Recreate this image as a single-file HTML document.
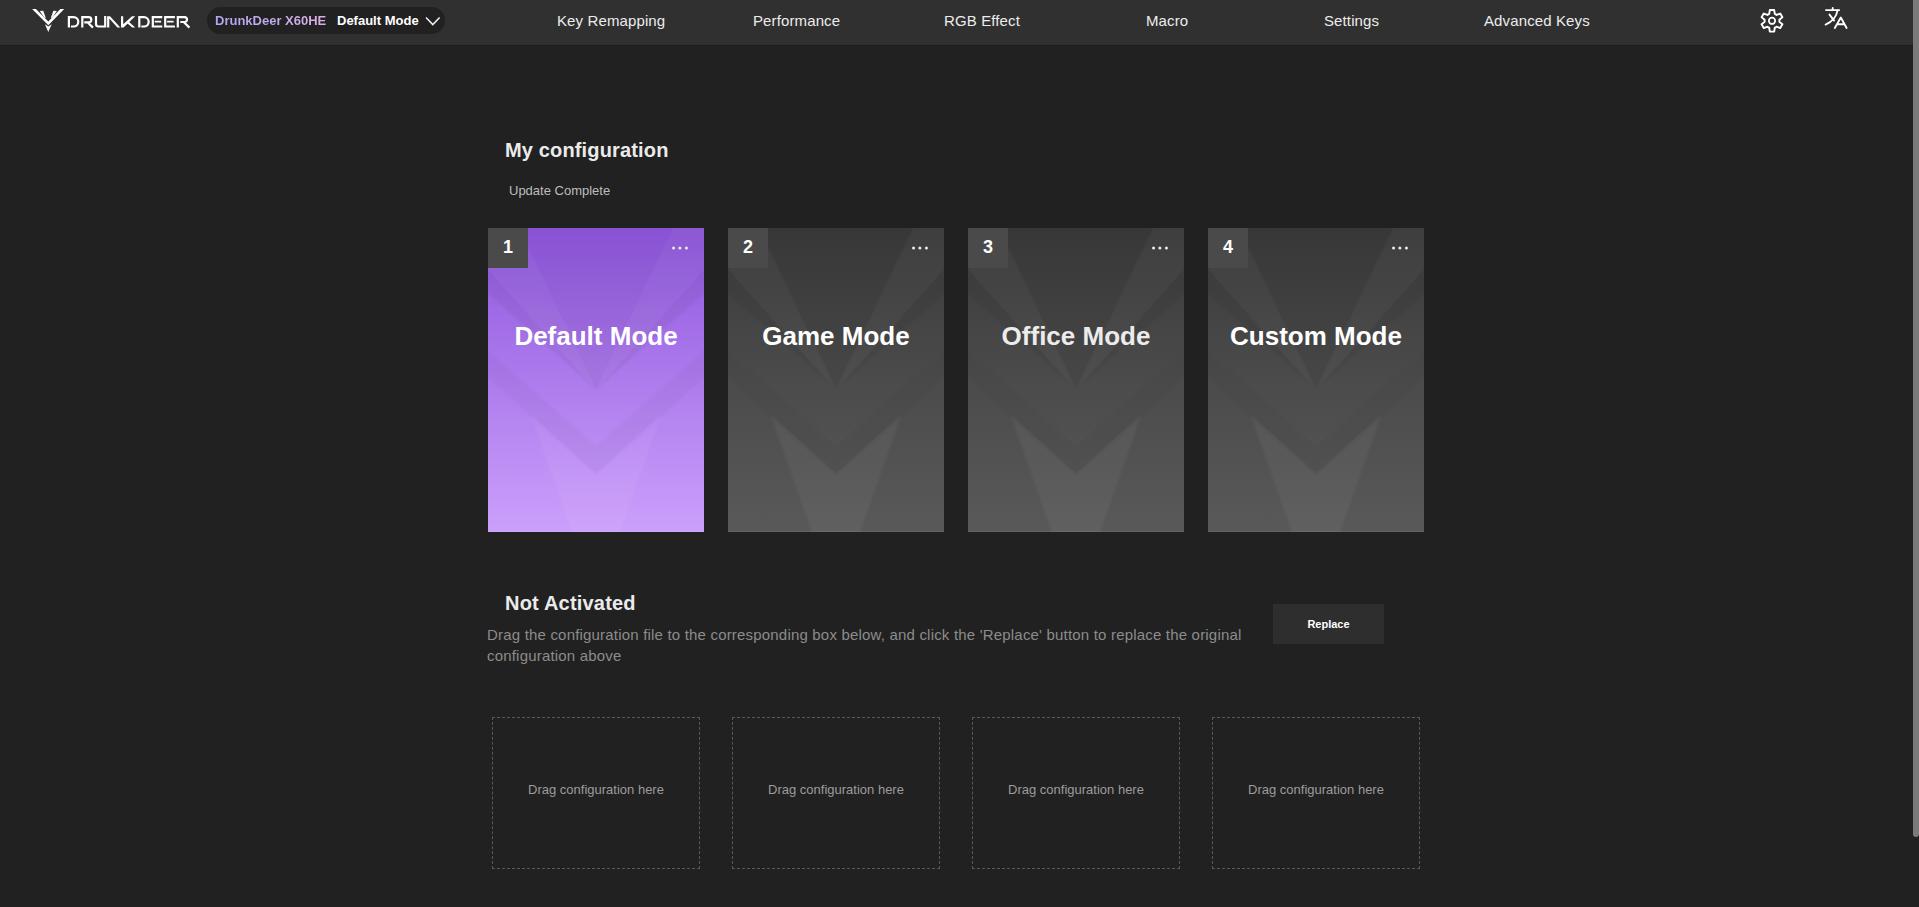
<!DOCTYPE html>
<html><head><meta charset="utf-8">
<style>
*{margin:0;padding:0;box-sizing:border-box}
html,body{width:1919px;height:907px;overflow:hidden;background:#212121;font-family:"Liberation Sans",sans-serif;color:#fff}
.abs{position:absolute}
#hdr{position:absolute;left:0;top:0;width:1913px;height:45px;background:#303030}
#sb{position:absolute;left:1913px;top:0;width:6px;height:837px;background:#7a7a7a;border-radius:0 0 3px 3px}
.pill{position:absolute;left:207px;top:7px;width:238px;height:27px;border-radius:14px;background:#212121}
.t{position:absolute;white-space:nowrap;line-height:1}
.nav{font-size:15px;color:#ececec;top:13px;letter-spacing:0.12px}
.card{position:absolute;top:228px;width:216px;height:304px;overflow:hidden}
.card svg.bg{position:absolute;left:0;top:0}
.card::after{content:"";position:absolute;left:0;right:0;bottom:0;height:1px;background:rgba(255,255,255,0.07)}
.badge{position:absolute;left:0;top:0;width:40px;height:40px;background:#4a4a4a;color:#fff;font-weight:bold;font-size:18px;line-height:38px;text-align:center}
.dots{position:absolute;left:184px;top:17.9px;width:24px;height:10px}
.dots i{position:absolute;top:0;width:3px;height:3px;border-radius:50%;background:#e8e8e8}
.mtitle{position:absolute;left:0;width:216px;top:93px;text-align:center;font-size:26px;font-weight:bold;color:#fff;line-height:30px;white-space:nowrap}
.drop{position:absolute;top:717px;width:208px;height:152px;border:1px dashed #585858}
.drop span{position:absolute;left:0;right:0;top:64px;text-align:center;font-size:13px;color:#9c9c9c;line-height:16px}
</style></head><body>
<div id="hdr"></div>
<div id="sb"></div>
<div class="abs" style="left:0;top:45px;width:1913px;height:1px;background:#1c1c1c"></div>
<!-- logo -->
<svg class="abs" style="left:0;top:0" width="200" height="45" viewBox="0 0 200 45">
 <g fill="#fff">
  <polygon points="32.1,9.1 35.9,9.1 48.3,21.6 60.4,9.1 64.2,9.1 48.3,25.3"/>
  <polygon points="39.8,11.0 43.2,10.8 45.8,18.0 44.2,17.4"/>
  <polygon points="56.8,11.0 53.4,10.8 50.8,18.0 52.4,17.4"/>
  <polygon points="44.9,24.2 48.3,26.6 51.7,24.2 48.3,32.1"/>
  <polygon points="107.1,16.2 110.0,16.2 120.3,27.4 117.4,27.4 109.3,18.6 109.3,27.4 107.1,27.4"/>
  <polygon points="121,16.2 123.2,16.2 123.2,24.3 132,16.2 135.2,16.2 123.6,27.4 121,27.4"/>
  <polygon points="126.9,23.0 128.6,21.4 135.2,27.4 132.2,27.4"/>
 </g>
 <g fill="none" stroke="#fff" stroke-width="2.2">
  <path d="M68.9,27.6 V17.1 H73.6 A4.7,4.7 0 0 1 73.6,26.5 H70.9"/>
  <path d="M82.3,27.6 V17.1 H88.7 A2.6,2.6 0 0 1 88.7,22.3 H84.3 M87.6,22.3 L92.9,27.6"/>
  <path d="M96,16 V24 A2.5,2.5 0 0 0 98.5,26.5 H105.2 V16"/>
  <path d="M139.3,27.6 V17.1 H144 A4.7,4.7 0 0 1 144,26.5 H141.3"/>
  <path d="M162.3,17.1 H152.8 V26.5 H162.3"/>
  <path d="M174.9,17.1 H165.2 V26.5 H174.9"/>
  <path d="M177.8,27.6 V17.1 H185 A2.5,2.5 0 0 1 185,22 H180.3 M183.7,22 L189.4,27.6"/>
 </g>
 <g fill="none" stroke="#fff" stroke-width="1.8">
  <path d="M154.7,21.7 H161.1 M167.1,21.7 H173.6"/>
 </g>
</svg>
<div class="pill"></div>
<div class="t" style="left:215px;top:14px;font-size:13px;font-weight:bold;color:#b9a2e6;background:linear-gradient(90deg,#b3a6f4,#d9b0e2);-webkit-background-clip:text;background-clip:text;-webkit-text-fill-color:transparent">DrunkDeer X60HE</div>
<div class="t" style="left:337px;top:14px;font-size:13px;font-weight:bold;color:#fff">Default Mode</div>
<svg class="abs" style="left:420px;top:12px" width="24" height="18" viewBox="0 0 24 18"><path d="M6,5.6 L12.8,12.6 L19.6,5.6" fill="none" stroke="#f0f0f0" stroke-width="1.5"/></svg>

<div class="t nav" style="left:557px">Key Remapping</div>
<div class="t nav" style="left:753px">Performance</div>
<div class="t nav" style="left:944px">RGB Effect</div>
<div class="t nav" style="left:1146px">Macro</div>
<div class="t nav" style="left:1324px">Settings</div>
<div class="t nav" style="left:1484px">Advanced Keys</div>

<svg class="abs" style="left:1752px;top:1px" width="40" height="40" viewBox="-20 -19.8 40 40">
 <path d="M-2.77,-6.86 L-2.19,-10.78 L2.19,-10.78 L2.77,-6.86 A7.4,7.4 0 0 1 4.56,-5.83 L8.24,-7.29 L10.43,-3.49 L7.33,-1.03 A7.4,7.4 0 0 1 7.33,1.03 L10.43,3.49 L8.24,7.29 L4.56,5.83 A7.4,7.4 0 0 1 2.77,6.86 L2.19,10.78 L-2.19,10.78 L-2.77,6.86 A7.4,7.4 0 0 1 -4.56,5.83 L-8.24,7.29 L-10.43,3.49 L-7.33,1.03 A7.4,7.4 0 0 1 -7.33,-1.03 L-10.43,-3.49 L-8.24,-7.29 L-4.56,-5.83 A7.4,7.4 0 0 1 -2.77,-6.86 Z" fill="none" stroke="#fff" stroke-width="1.9" stroke-linejoin="round"/>
 <circle cx="0" cy="0" r="3.15" fill="none" stroke="#fff" stroke-width="1.75"/>
</svg>
<svg class="abs" style="left:1820px;top:3px" width="32" height="32" viewBox="0 0 32 32">
 <g fill="none" stroke="#fff" stroke-width="1.85" stroke-linecap="round" stroke-linejoin="round">
  <path d="M6.0,7.06 H19.2 M12.7,5.0 V6.9"/>
  <path d="M17.6,7.4 C16.6,12.5 13,18.5 5.6,21.6"/>
  <path d="M9.5,11.6 L14.1,17.6"/>
  <path d="M14.8,25.0 L20.8,14.5 L26.6,25.0 M17.2,21.2 H24.4"/>
 </g>
</svg>

<div class="t" style="left:505px;top:140px;font-size:20px;font-weight:bold;color:#ebebeb;letter-spacing:0.15px">My configuration</div>
<div class="t" style="left:509px;top:184px;font-size:13px;color:#bdbdbd">Update Complete</div>

<div class="card" style="left:488px;background:linear-gradient(#8f56de,#cba0fb)">
 <svg class="bg" width="216" height="304" viewBox="0 0 216 304"><defs><filter id="soft" x="-5%" y="-5%" width="110%" height="110%"><feGaussianBlur stdDeviation="1.1"/></filter></defs><g id="pat" filter="url(#soft)">
  <polygon points="-4,-4 220,-4 220,62 108,162 -4,62" fill="#000" fill-opacity="0.05"/>
  <polygon points="-4,-4 29,-4 108,162 -4,37" fill="#fff" fill-opacity="0.035"/>
  <polygon points="220,-4 187,-4 108,162 220,37" fill="#fff" fill-opacity="0.035"/>
  <polygon points="-4,118.4 108,218 220,118.4 220,146.4 108,247 -4,146.4" fill="#000" fill-opacity="0.032"/>
  <path d="M43,188 L108,247 L173,188 L130,310 L86,310 Z" fill="#fff" fill-opacity="0.045"/>
 </g></svg>
 <div class="badge">1</div>
 <svg class="dots" width="24" height="10" viewBox="0 0 24 10"><g fill="#ececec"><circle cx="1.55" cy="2" r="1.5"/><circle cx="7.9" cy="2" r="1.5"/><circle cx="14.45" cy="2" r="1.5"/></g></svg>
 <div class="mtitle">Default Mode</div>
</div>
<div class="card" style="left:728px;background:linear-gradient(#3a3a3a,#4b4b4b 50%,#595959)">
 <svg class="bg" width="216" height="304" viewBox="0 0 216 304"><use href="#pat"/></svg>
 <div class="badge">2</div>
 <svg class="dots" width="24" height="10" viewBox="0 0 24 10"><g fill="#ececec"><circle cx="1.55" cy="2" r="1.5"/><circle cx="7.9" cy="2" r="1.5"/><circle cx="14.45" cy="2" r="1.5"/></g></svg>
 <div class="mtitle">Game Mode</div>
</div>
<div class="card" style="left:968px;background:linear-gradient(#3a3a3a,#4b4b4b 50%,#595959)">
 <svg class="bg" width="216" height="304" viewBox="0 0 216 304"><use href="#pat"/></svg>
 <div class="badge">3</div>
 <svg class="dots" width="24" height="10" viewBox="0 0 24 10"><g fill="#ececec"><circle cx="1.55" cy="2" r="1.5"/><circle cx="7.9" cy="2" r="1.5"/><circle cx="14.45" cy="2" r="1.5"/></g></svg>
 <div class="mtitle" style="color:#ececec">Office Mode</div>
</div>
<div class="card" style="left:1208px;background:linear-gradient(#3a3a3a,#4b4b4b 50%,#595959)">
 <svg class="bg" width="216" height="304" viewBox="0 0 216 304"><use href="#pat"/></svg>
 <div class="badge">4</div>
 <svg class="dots" width="24" height="10" viewBox="0 0 24 10"><g fill="#ececec"><circle cx="1.55" cy="2" r="1.5"/><circle cx="7.9" cy="2" r="1.5"/><circle cx="14.45" cy="2" r="1.5"/></g></svg>
 <div class="mtitle">Custom Mode</div>
</div>

<div class="t" style="left:505px;top:593px;font-size:20px;font-weight:bold;color:#ebebeb;letter-spacing:0.2px">Not Activated</div>
<div class="abs" style="left:487px;top:624px;width:770px;font-size:15px;line-height:21px;color:#8c8c8c;letter-spacing:0.19px">Drag the configuration file to the corresponding box below, and click the 'Replace' button to replace the original configuration above</div>
<div class="abs" style="left:1273px;top:604px;width:111px;height:40px;background:#2e2e2e;color:#fff;font-size:11px;font-weight:bold;line-height:40px;text-align:center">Replace</div>

<div class="drop" style="left:492px"><span>Drag configuration here</span></div>
<div class="drop" style="left:732px"><span>Drag configuration here</span></div>
<div class="drop" style="left:972px"><span>Drag configuration here</span></div>
<div class="drop" style="left:1212px"><span>Drag configuration here</span></div>
</body></html>
